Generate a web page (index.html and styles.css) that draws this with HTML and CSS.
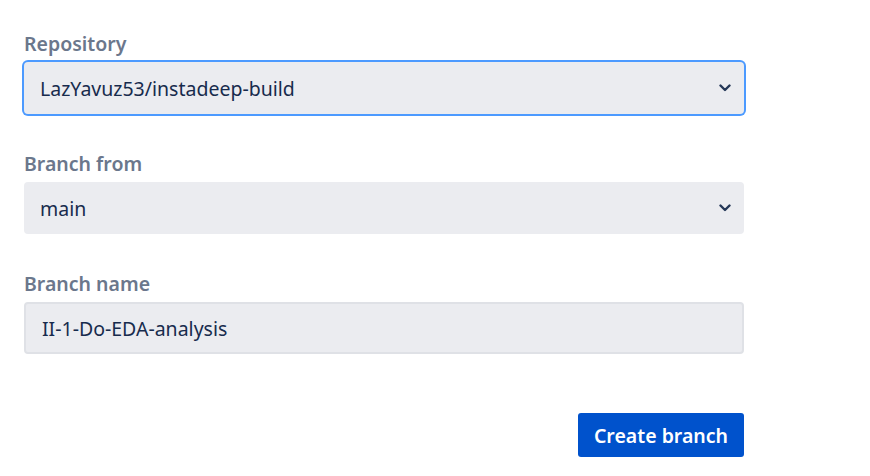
FILE: index.html
```html
<!DOCTYPE html>
<html lang="en">
<head>
<meta charset="utf-8">
<title>Create branch</title>
<link rel="stylesheet" href="styles.css">
</head>
<body>
<form class="form">
  <div class="field">
    <label class="label">Repository</label>
    <div class="select focused">
      <span class="value">LazYavuz53/instadeep-build</span>
      <svg class="chevron" width="12" height="8" viewBox="0 0 12 8"><path d="M1.5 1.5 L6 6 L10.5 1.5" fill="none" stroke="#253858" stroke-width="2.4" stroke-linecap="round" stroke-linejoin="round"/></svg>
    </div>
  </div>
  <div class="field">
    <label class="label">Branch from</label>
    <div class="select">
      <span class="value">main</span>
      <svg class="chevron" width="12" height="8" viewBox="0 0 12 8"><path d="M1.5 1.5 L6 6 L10.5 1.5" fill="none" stroke="#253858" stroke-width="2.4" stroke-linecap="round" stroke-linejoin="round"/></svg>
    </div>
  </div>
  <div class="field">
    <label class="label">Branch name</label>
    <div class="textfield">
      <span class="value">II-1-Do-EDA-analysis</span>
    </div>
  </div>
  <div class="actions">
    <button type="button" class="button">Create branch</button>
  </div>
</form>
</body>
</html>
```
FILE: styles.css
```css
html, body {
  margin: 0;
  padding: 0;
  background: #ffffff;
}
body {
  font-family: "Noto Sans", "Open Sans", sans-serif;
  color: #172b4d;
}
.form {
  width: 720px;
  padding: 32px 0 0 24px;
}
.field {
  display: flex;
  flex-direction: column;
  margin-bottom: 38px;
}
.label {
  font-size: 19.5px;
  line-height: 24px;
  font-weight: 600;
  color: #6b778c;
  margin-bottom: 6px;
}
.select, .textfield {
  box-sizing: border-box;
  height: 52px;
  width: 720px;
  background: #ebecf0;
  border-radius: 4px;
  display: flex;
  align-items: center;
  font-size: 19.5px;
}
.select {
  padding: 0 12px 0 16px;
  justify-content: space-between;
}
.select.focused {
  box-shadow: 0 0 0 2px #4c9aff;
}
.textfield {
  border: 2px solid #dfe1e6;
  padding: 0 14px 0 16px;
  border-radius: 4px;
}
.value {
  color: #172b4d;
}
.chevron {
  display: block;
  margin-right: 1px;
}
.actions {
  display: flex;
  justify-content: flex-end;
  margin-top: 59px;
}
.button {
  height: 44px;
  padding: 0 16px;
  background: #0052cc;
  color: #ffffff;
  border: none;
  border-radius: 3px;
  font-family: "Noto Sans", "Open Sans", sans-serif;
  font-size: 19.5px;
  font-weight: 600;
}
```
